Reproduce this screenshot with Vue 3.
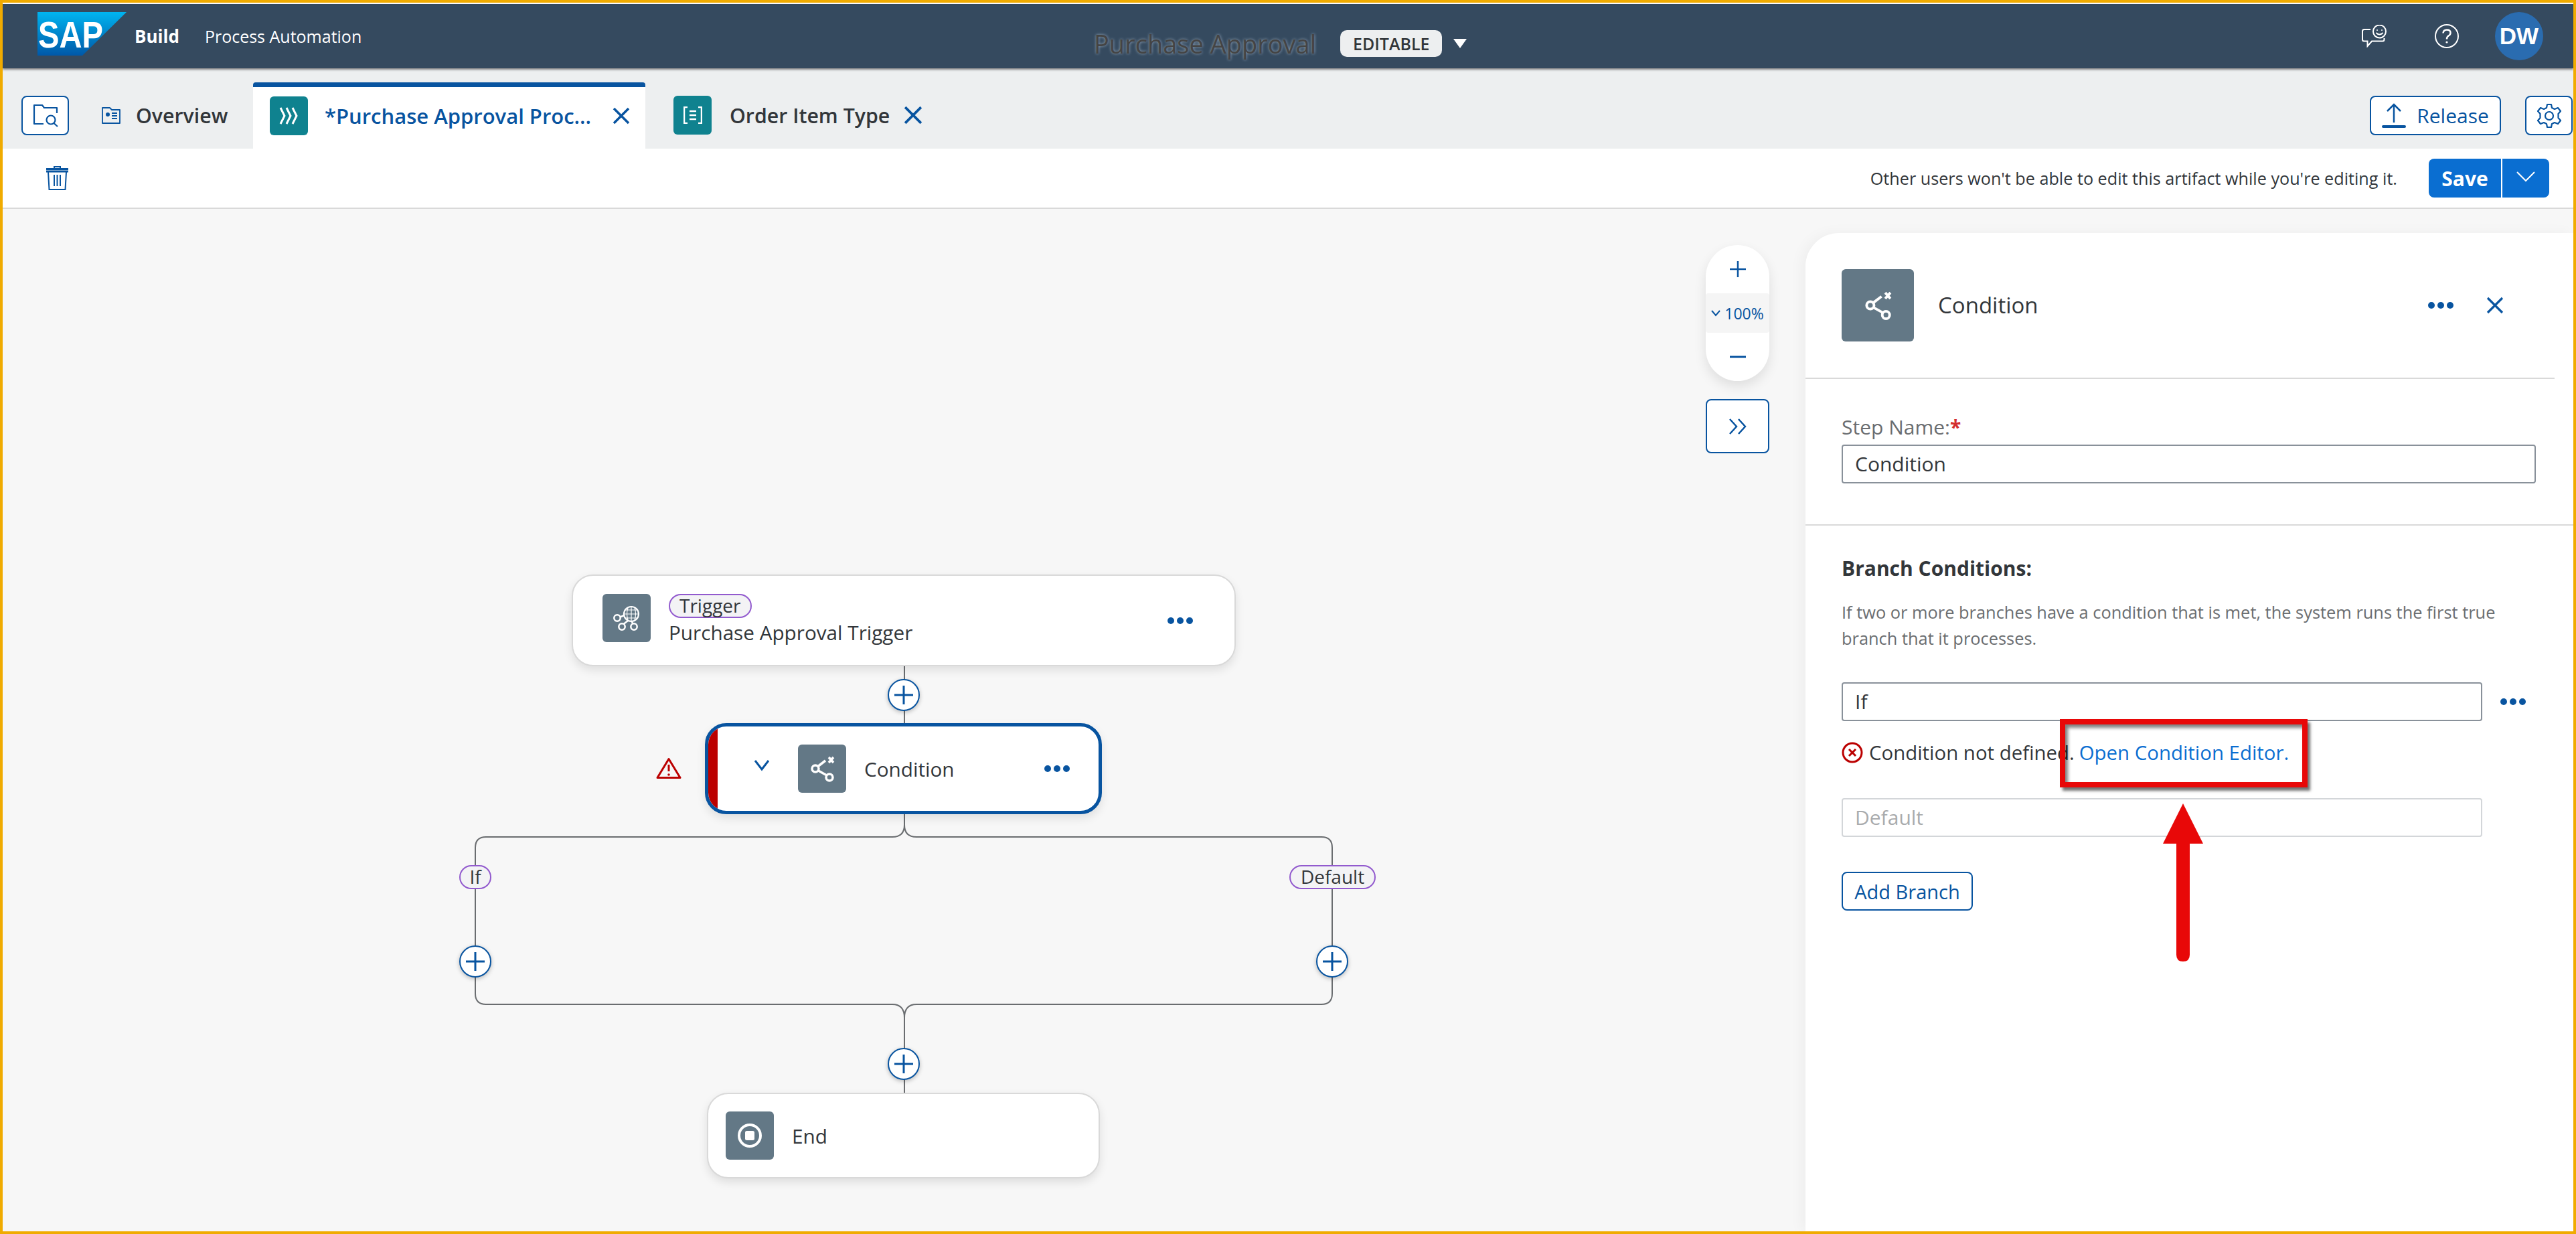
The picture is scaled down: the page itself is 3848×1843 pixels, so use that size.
<script setup>
const plusNodes = ['p1', 'p2', 'p3', 'p4']
</script>

<template>
  <div class="frame">
    <header class="shell">
      <svg class="logo" width="134" height="66" viewBox="0 0 134 66">
        <defs>
          <linearGradient id="sapg" x1="0" y1="0" x2="0" y2="1">
            <stop offset="0" stop-color="#00b4f0" />
            <stop offset="1" stop-color="#0058a8" />
          </linearGradient>
        </defs>
        <polygon points="0,0 133,0 67,65 0,65" fill="url(#sapg)" />
        <text x="1" y="53" class="logo-text" textLength="97" lengthAdjust="spacingAndGlyphs">SAP</text>
      </svg>
      <span class="brand">Build</span>
      <span class="product">Process Automation</span>
      <div class="title-group">
        <span class="doc-title">Purchase Approval</span>
        <span class="editable">EDITABLE</span>
        <svg width="20" height="14" viewBox="0 0 20 14"><polygon points="0,0 20,0 10,14" fill="#fff" /></svg>
      </div>
      <div class="shell-actions">
        <svg class="feedback" width="38" height="34" viewBox="0 0 38 34" fill="none" stroke="#fff" stroke-width="2">
          <path d="M13 7H3.500Q1 7 1 9.500V22Q1 24.500 3.500 24.500H8.500V32L15 24.500H31Q33.500 24.500 33.500 22V20" />
          <circle cx="26.500" cy="10" r="9.500" />
          <circle cx="23" cy="8" r="1" fill="#fff" stroke="none" />
          <circle cx="30" cy="8" r="1" fill="#fff" stroke="none" />
          <path d="M21.500 12Q26.500 17 31.500 12" />
        </svg>
        <svg class="help" width="36" height="36" viewBox="0 0 36 36" fill="none" stroke="#fff" stroke-width="2">
          <circle cx="18" cy="18" r="17" />
          <path d="M12.500 13.500Q13 8.500 18 8.500Q23.500 8.500 23.500 13Q23.500 16 20.500 17.500Q18 19 18 22.500" stroke-width="2.500" />
          <circle cx="18" cy="27" r="1.600" fill="#fff" stroke="none" />
        </svg>
        <div class="avatar">DW</div>
      </div>
    </header>

    <nav class="tabs">
      <button class="icon-btn search-btn">
        <svg width="38" height="35" viewBox="0 0 38 35" fill="none" stroke="#0854a0" stroke-width="2.200">
          <path d="M16 30H2V2H14L17 6H36V14" stroke-linejoin="round" />
          <circle cx="27" cy="24" r="6.500" />
          <path d="M31.500 29L37 34" />
        </svg>
      </button>
      <div class="tab tab-plain overview">
        <svg width="28" height="25" viewBox="0 0 28 25" fill="none" stroke="#0854a0" stroke-width="1.800">
          <path d="M1 1H12L15 4H27V24H1Z" stroke-linejoin="round" />
          <circle cx="9" cy="11" r="3" fill="#0854a0" stroke="none" />
          <path d="M15 9H23M15 13H23M15 17H23" stroke-width="2" />
        </svg>
        <span class="tab-label">Overview</span>
      </div>
      <div class="tab tab-active">
        <span class="tab-icon">
          <svg width="30" height="26" viewBox="0 0 30 26" fill="none" stroke="#fff" stroke-width="3">
            <path d="M2 1L8 13L2 25M11 1L17 13L11 25M20 1L26 13L20 25" />
          </svg>
        </span>
        <span class="tab-label active-label">*Purchase Approval Proc...</span>
        <svg class="tab-x" width="26" height="26" viewBox="0 0 26 26" fill="none" stroke="#0854a0" stroke-width="3.500">
          <path d="M2 2L24 24M24 2L2 24" />
        </svg>
      </div>
      <div class="tab tab-plain order">
        <span class="tab-icon">
          <svg width="28" height="26" viewBox="0 0 28 26" fill="none" stroke="#fff" stroke-width="2.500">
            <path d="M6 1H1V25H6M22 1H27V25H22M9 7H19M9 13H19M9 19H19" />
          </svg>
        </span>
        <span class="tab-label">Order Item Type</span>
        <svg class="tab-x" width="28" height="28" viewBox="0 0 26 26" fill="none" stroke="#0854a0" stroke-width="3.500">
          <path d="M2 2L24 24M24 2L2 24" />
        </svg>
      </div>
      <button class="release">
        <svg width="36" height="38" viewBox="0 0 36 38" fill="none" stroke="#0854a0" stroke-width="2.500">
          <path d="M18 29V2M8 12L18 2L28 12" />
          <path d="M2 35H34" stroke-width="4" stroke-linecap="round" />
        </svg>
        <span>Release</span>
      </button>
      <button class="icon-btn gear-btn">
        <svg width="38" height="38" viewBox="0 0 38 38" fill="none" stroke="#0854a0" stroke-width="2.200">
          <circle cx="19" cy="19" r="6" />
          <path d="M16 2H22L23 7L27 9L32 7L36 12L32.500 16V22L36 26L32 31L27 29L23 31L22 36H16L15 31L11 29L6 31L2 26L5.500 22V16L2 12L6 7L11 9L15 7Z" stroke-linejoin="round" />
        </svg>
      </button>
    </nav>

    <div class="toolbar">
      <svg class="trash" width="33" height="36" viewBox="0 0 33 36" fill="none" stroke="#0854a0" stroke-width="2">
        <path d="M12 3V1H21V3" />
        <path d="M0 4.500H33M0 8H33" stroke-width="3" />
        <path d="M3 9L4.500 35H28.500L30 9" />
        <path d="M12 13V30M16.500 13V30M21 13V30" />
      </svg>
      <span class="lock-note">Other users won't be able to edit this artifact while you're editing it.</span>
      <div class="save-group">
        <button class="save">Save</button>
        <button class="save-more">
          <svg width="28" height="16" viewBox="0 0 28 16" fill="none" stroke="#fff" stroke-width="2"><path d="M1 1L14 14L27 1" /></svg>
        </button>
      </div>
    </div>

    <main class="workspace">
      <section class="canvas">
        <svg class="wires" width="2693" height="1527" viewBox="4 312 2693 1527" fill="none" stroke="#6a6d70" stroke-width="2">
          <path d="M1351 995V1080" />
          <path d="M1351 1216V1232Q1351 1250 1333 1250H726Q710 1250 710 1266V1484Q710 1500 726 1500H1333Q1351 1500 1351 1520V1632" />
          <path d="M1351 1232Q1351 1250 1369 1250H1974Q1990 1250 1990 1266V1484Q1990 1500 1974 1500H1369Q1351 1500 1351 1520" />
        </svg>

        <div class="node trigger">
          <span class="node-icon">
            <svg width="72" height="72" viewBox="0 0 72 72" fill="none" stroke="#fff" stroke-width="2.200">
              <circle cx="43" cy="30" r="11" />
              <path d="M43 19V41M32 30H54M34 24H52M34 36H52M38 21Q35 30 38 39M48 21Q51 30 48 39" stroke-width="1.200" />
              <circle cx="22" cy="36" r="4.700" stroke-width="2.500" />
              <circle cx="29" cy="49" r="4.700" stroke-width="2.500" />
              <circle cx="47" cy="49" r="4.700" stroke-width="2.500" />
              <path d="M26.500 34.500L32.500 32M31.500 45L38 40M45.500 44.500L43.500 41" stroke-width="2.500" />
            </svg>
          </span>
          <div class="trigger-text">
            <span class="chip">Trigger</span>
            <span class="node-name">Purchase Approval Trigger</span>
          </div>
          <svg class="dots dots-trigger" width="38" height="10" viewBox="0 0 38 10"><circle cx="5" cy="5" r="5" /><circle cx="19" cy="5" r="5" /><circle cx="33" cy="5" r="5" /></svg>
        </div>

        <div class="plus" :class="plusNodes[0]"><svg width="30" height="30" viewBox="0 0 30 30" stroke="#0854a0" stroke-width="3"><path d="M15 1V29M1 15H29" /></svg></div>

        <svg class="warn" width="38" height="33" viewBox="0 0 38 33" fill="none" stroke="#bb0000" stroke-width="3">
          <path d="M19 2.500L36 30.500H2Z" stroke-linejoin="round" />
          <path d="M19 11V21" />
          <circle cx="19" cy="26" r="1.800" fill="#bb0000" stroke="none" />
        </svg>

        <div class="node condition">
          <span class="red-bar"></span>
          <svg class="node-chevron" width="24" height="18" viewBox="0 0 24 18" fill="none" stroke="#0854a0" stroke-width="3"><path d="M2 2L12 15L22 2" /></svg>
          <span class="node-icon">
            <svg width="72" height="72" viewBox="0 0 72 72" fill="none" stroke="#fff" stroke-width="3.500">
              <circle cx="26" cy="36" r="5" />
              <circle cx="47" cy="49" r="5" />
              <path d="M30 32.500L41 24M30.500 39L43 46M46 19L53 27M53 19L46 27" />
            </svg>
          </span>
          <span class="node-name cond-name">Condition</span>
          <svg class="dots dots-cond" width="38" height="10" viewBox="0 0 38 10"><circle cx="5" cy="5" r="5" /><circle cx="19" cy="5" r="5" /><circle cx="33" cy="5" r="5" /></svg>
        </div>

        <span class="chip chip-if">If</span>
        <span class="chip chip-default">Default</span>
        <div class="plus" :class="plusNodes[1]"><svg width="30" height="30" viewBox="0 0 30 30" stroke="#0854a0" stroke-width="3"><path d="M15 1V29M1 15H29" /></svg></div>
        <div class="plus" :class="plusNodes[2]"><svg width="30" height="30" viewBox="0 0 30 30" stroke="#0854a0" stroke-width="3"><path d="M15 1V29M1 15H29" /></svg></div>
        <div class="plus" :class="plusNodes[3]"><svg width="30" height="30" viewBox="0 0 30 30" stroke="#0854a0" stroke-width="3"><path d="M15 1V29M1 15H29" /></svg></div>

        <div class="node end">
          <span class="node-icon">
            <svg width="72" height="72" viewBox="0 0 72 72" fill="none" stroke="#fff" stroke-width="4">
              <circle cx="36" cy="36" r="16" />
              <rect x="29" y="29" width="14" height="14" rx="2.500" fill="#fff" stroke="none" />
            </svg>
          </span>
          <span class="node-name end-name">End</span>
        </div>

        <div class="zoom-ctl">
          <div class="zoom-btn">
            <svg width="24" height="24" viewBox="0 0 24 24" stroke="#0854a0" stroke-width="2.500"><path d="M12 0V24M0 12H24" /></svg>
          </div>
          <div class="zoom-level">
            <svg width="14" height="10" viewBox="0 0 14 10" fill="none" stroke="#0854a0" stroke-width="2"><path d="M1 1L7 8L13 1" /></svg>
            <span>100%</span>
          </div>
          <div class="zoom-btn">
            <svg width="24" height="24" viewBox="0 0 24 24" stroke="#0854a0" stroke-width="3"><path d="M0 12H24" /></svg>
          </div>
        </div>
        <button class="icon-btn collapse-btn">
          <svg width="30" height="24" viewBox="0 0 30 24" fill="none" stroke="#0854a0" stroke-width="2.500"><path d="M3 1L13 12L3 23M16 1L26 12L16 23" /></svg>
        </button>
      </section>

      <aside class="panel">
        <div class="panel-head">
          <span class="node-icon panel-icon">
            <svg width="80" height="80" viewBox="0 0 72 72" fill="none" stroke="#fff" stroke-width="3.500">
              <circle cx="26" cy="36" r="5" />
              <circle cx="47" cy="49" r="5" />
              <path d="M30 32.500L41 24M30.500 39L43 46M46 19L53 27M53 19L46 27" />
            </svg>
          </span>
          <span class="panel-title">Condition</span>
          <svg class="dots panel-dots" width="38" height="10" viewBox="0 0 38 10"><circle cx="5" cy="5" r="5" /><circle cx="19" cy="5" r="5" /><circle cx="33" cy="5" r="5" /></svg>
          <svg width="26" height="26" viewBox="0 0 26 26" fill="none" stroke="#0854a0" stroke-width="3.200"><path d="M2 2L24 24M24 2L2 24" /></svg>
        </div>

        <div class="step-section">
          <div class="field-label">Step Name:<span class="req">*</span></div>
          <div class="input">Condition</div>
        </div>

        <div class="branch-section">
          <h3 class="branch-title">Branch Conditions:</h3>
          <p class="branch-help">If two or more branches have a condition that is met, the system runs the first true branch that it processes.</p>
          <div class="branch-row">
            <div class="input input-branch">If</div>
            <svg class="dots" width="38" height="10" viewBox="0 0 38 10"><circle cx="5" cy="5" r="5" /><circle cx="19" cy="5" r="5" /><circle cx="33" cy="5" r="5" /></svg>
          </div>
          <div class="error-row">
            <svg width="32" height="32" viewBox="0 0 32 32" fill="none" stroke="#bb0000">
              <circle cx="16" cy="16" r="14" stroke-width="3" />
              <path d="M11 11L21 21M21 11L11 21" stroke-width="3" />
            </svg>
            <span class="error-text">Condition not defined.</span>
            <a class="link">Open Condition Editor.</a>
          </div>
          <div class="input input-branch input-disabled">Default</div>
          <button class="add-branch">Add Branch</button>
        </div>
      </aside>
    </main>

    <div class="callout"></div>
    <svg class="arrow" width="60" height="236" viewBox="0 0 60 236">
      <path d="M30 0L60 60H40V226Q40 236 30 236Q20 236 20 226V60H0Z" fill="#e80808" />
    </svg>
  </div>
</template>

<style>
html, body { margin: 0; overflow: hidden; background: #fff; }
</style>

<style scoped>
.frame {
  position: relative;
  box-sizing: border-box;
  width: 3848px;
  height: 1843px;
  border: 4px solid #f0ab00;
  padding-top: 2px;
  background: #fff;
  display: flex;
  flex-direction: column;
  font-family: "Open Sans", "Noto Sans", sans-serif;
  color: #32363a;
  overflow: hidden;
}
button { font-family: inherit; cursor: pointer; padding: 0; }

.shell {
  position: relative;
  z-index: 2;
  flex: none;
  height: 96px;
  background: #354a5f;
  box-shadow: 0 2px 3px rgba(0, 0, 0, .45);
  display: flex;
  align-items: center;
  color: #fff;
}
.logo { margin-left: 52px; margin-top: -6px; flex: none; overflow: visible; }
.logo-text { font: 700 56px "Liberation Sans", sans-serif; fill: #fff; }
.brand { margin-left: 11px; font-size: 26px; font-weight: 700; }
.product { margin-left: 38px; font-size: 25px; }
.title-group {
  position: absolute;
  left: 1630px;
  top: 11px;
  height: 96px;
  display: flex;
  align-items: center;
}
.doc-title {
  font-size: 38px;
  color: #444;
  text-shadow: 0 0 4px #9fb0c0;
}
.editable {
  margin-left: 36px;
  width: 152px;
  height: 40px;
  line-height: 40px;
  text-align: center;
  background: #edeff0;
  border-radius: 10px;
  color: #32363a;
  font-size: 25px;
  font-weight: 600;
}
.title-group svg { margin-left: 17px; }
.shell-actions {
  margin-left: auto;
  display: flex;
  align-items: center;
  padding-right: 45px;
}
.help { margin-left: 71px; }
.avatar {
  margin-left: 54px;
  width: 72px;
  height: 72px;
  border-radius: 50%;
  background: #2a6cb0;
  text-align: center;
  line-height: 72px;
  font-family: "Liberation Sans", sans-serif;
  font-size: 35px;
  font-weight: 700;
}

.tabs {
  flex: none;
  height: 120px;
  background: #edeff0;
  display: flex;
  align-items: flex-start;
  padding-right: 1px;
}
.icon-btn {
  box-sizing: border-box;
  display: flex;
  align-items: center;
  justify-content: center;
  background: #fff;
  border: 2px solid #0854a0;
  border-radius: 8px;
}
.search-btn { margin: 41px 0 0 28px; width: 71px; height: 59px; flex: none; }
.tab { display: flex; align-items: center; flex: none; }
.tab-plain { height: 58px; margin-top: 41px; }
.overview { margin-left: 49px; width: 226px; }
.overview .tab-label { margin-left: 23px; }
.tab-label { font-size: 30.300px; font-weight: 600; white-space: nowrap; }
.tab-active {
  box-sizing: border-box;
  margin-top: 21px;
  width: 586px;
  height: 99px;
  background: #fff;
  border-top: 7px solid #0854a0;
  border-radius: 4px 4px 0 0;
  padding-left: 25px;
  padding-bottom: 7px;
}
.tab-icon {
  flex: none;
  width: 57px;
  height: 58px;
  border-radius: 6px;
  background: #0f828f;
  display: flex;
  align-items: center;
  justify-content: center;
}
.active-label { margin-left: 25px; width: 403px; color: #0854a0; font-size: 31px; }
.tab-x { margin-left: 27px; flex: none; }
.order { margin-left: 42px; }
.order .tab-label { margin-left: 27px; }
.order .tab-x { margin-left: 21px; }
.release {
  box-sizing: border-box;
  margin: 41px 0 0 auto;
  width: 196px;
  height: 59px;
  flex: none;
  display: flex;
  align-items: center;
  justify-content: center;
  gap: 16px;
  background: #fff;
  border: 2px solid #0854a0;
  border-radius: 8px;
  color: #0854a0;
  font-size: 30px;
}
.gear-btn { margin: 41px 0 0 36px; width: 71px; height: 59px; flex: none; }

.toolbar {
  flex: none;
  box-sizing: border-box;
  height: 90px;
  border-bottom: 2px solid #d9d9d9;
  background: #fff;
  display: flex;
  align-items: center;
  padding: 0 36px 0 65px;
}
.lock-note { margin-left: auto; font-size: 25.200px; white-space: nowrap; }
.save-group { margin-left: 47px; display: flex; height: 58px; }
.save {
  width: 108px;
  border: 0;
  background: #0a6ed1;
  color: #fff;
  border-radius: 8px 0 0 8px;
  font-size: 30px;
  font-weight: 700;
}
.save-more {
  margin-left: 2px;
  width: 70px;
  border: 0;
  background: #0a6ed1;
  border-radius: 0 8px 8px 0;
}

.workspace {
  flex: 1;
  min-height: 0;
  display: flex;
  background: #f7f7f7;
}
.canvas { position: relative; flex: 1; min-width: 0; }
.wires { position: absolute; left: 0; top: 0; }

.node {
  position: absolute;
  box-sizing: border-box;
  background: #fff;
  border: 2px solid #d9d9d9;
  border-radius: 32px;
  box-shadow: 0 6px 14px rgba(0, 0, 0, .1);
  display: flex;
}
.node-icon {
  flex: none;
  width: 72px;
  height: 72px;
  border-radius: 6px;
  background: #637886;
  display: flex;
  align-items: center;
  justify-content: center;
}
.node-name { font-size: 29.700px; white-space: nowrap; }
.trigger {
  left: 850px;
  top: 546px;
  width: 992px;
  height: 137px;
  padding: 27px 0 0 44px;
  align-items: flex-start;
}
.trigger-text { margin-left: 27px; display: flex; flex-direction: column; align-items: flex-start; }
.trigger-text .node-name { margin-top: 1px; line-height: 42px; }
.dots { fill: #0854a0; flex: none; }
.dots-trigger { position: absolute; right: 62px; top: 62px; }
.chip {
  box-sizing: border-box;
  display: inline-block;
  height: 36px;
  line-height: 31px;
  border: 2px solid #925ace;
  border-radius: 18px;
  background: #f3f3f5;
  color: #32363a;
  font-size: 28px;
  text-align: center;
  padding: 0 14px;
}
.chip-if { position: absolute; left: 682px; top: 980px; width: 48px; padding: 0; }
.chip-default { position: absolute; left: 1922px; top: 980px; width: 129px; padding: 0; }

.plus {
  position: absolute;
  box-sizing: border-box;
  width: 48px;
  height: 48px;
  border: 2px solid #0854a0;
  border-radius: 50%;
  background: #fff;
  box-shadow: 0 2px 6px rgba(0, 0, 0, .25);
  display: flex;
  align-items: center;
  justify-content: center;
}
.p1 { left: 1322px; top: 702px; }
.p2 { left: 682px; top: 1100px; }
.p3 { left: 1962px; top: 1100px; }
.p4 { left: 1322px; top: 1253px; }
.warn { position: absolute; left: 976px; top: 819px; }
.condition {
  left: 1049px;
  top: 768px;
  width: 593px;
  height: 136px;
  border: 5px solid #0854a0;
  overflow: hidden;
  align-items: center;
  padding: 0 43px 0 68px;
}
.red-bar { position: absolute; left: 0; top: 0; bottom: 0; width: 14px; background: #bb0000; }
.node-chevron { flex: none; margin-top: -10px; }
.condition .node-icon { margin-left: 42px; }
.cond-name { margin-left: 27px; }
.dots-cond { margin-left: auto; }
.end {
  left: 1052px;
  top: 1320px;
  width: 587px;
  height: 128px;
  align-items: center;
  padding-left: 26px;
}
.end-name { margin-left: 27px; }

.zoom-ctl {
  position: absolute;
  left: 2544px;
  top: 54px;
  width: 95px;
  height: 203px;
  border-radius: 48px;
  background: #fff;
  box-shadow: 0 8px 18px rgba(0, 0, 0, .1);
  display: flex;
  flex-direction: column;
}
.zoom-btn { flex: 1; display: flex; align-items: center; justify-content: center; }
.zoom-level {
  height: 59px;
  background: #f5f5f5;
  border-radius: 4px;
  display: flex;
  align-items: center;
  justify-content: center;
  gap: 6px;
  color: #0854a0;
  font-size: 23px;
}
.collapse-btn { position: absolute; left: 2544px; top: 284px; width: 95px; height: 81px; }

.panel {
  flex: none;
  width: 1147px;
  margin-top: 36px;
  background: #fff;
  border-radius: 50px 0 0 0;
  box-shadow: -6px 0 20px rgba(0, 0, 0, .04);
  display: flex;
  flex-direction: column;
}
.panel-head {
  box-sizing: border-box;
  flex: none;
  height: 218px;
  margin-right: 28px;
  padding: 54px 76px 0 54px;
  border-bottom: 2px solid #d9d9d9;
  display: flex;
  align-items: flex-start;
}
.panel-icon { width: 108px; height: 108px; }
.panel-title { margin-left: 36px; height: 108px; line-height: 108px; font-size: 33px; }
.panel-dots { margin: 49px 49px 0 auto; }
.panel-head > svg:last-child { margin-top: 41px; flex: none; }
.step-section {
  box-sizing: border-box;
  flex: none;
  height: 219px;
  padding: 52px 56px 0 54px;
  border-bottom: 2px solid #d9d9d9;
}
.field-label { height: 40px; line-height: 40px; font-size: 30px; color: #6a6d70; }
.req { color: #d32f2f; font-weight: 700; }
.input {
  box-sizing: border-box;
  height: 58px;
  margin-top: 6px;
  line-height: 54px;
  padding-left: 18px;
  border: 2px solid #89919a;
  border-radius: 4px;
  background: #fff;
  font-size: 30px;
}
.branch-section { flex: 1; padding: 44px 56px 0 54px; }
.branch-title { margin: 0; height: 40px; line-height: 40px; font-size: 30px; font-weight: 700; }
.branch-help {
  margin: 26px 0 0;
  width: 990px;
  line-height: 39px;
  font-size: 25.400px;
  color: #6a6d70;
}
.branch-row { display: flex; align-items: center; gap: 27px; margin-top: 46px; }
.branch-row .input { margin-top: 0; }
.input-branch { width: 957px; flex: none; }
.error-row { display: flex; align-items: center; height: 40px; margin-top: 27px; font-size: 29.400px; white-space: nowrap; }
.error-text { margin-left: 9px; }
.link { margin-left: 7px; color: #0a6ed1; }
.input-disabled { margin-top: 48px; border-color: #d3d6d9; color: #a9abad; }
.add-branch {
  box-sizing: border-box;
  display: block;
  margin-top: 52px;
  width: 196px;
  height: 58px;
  background: #fff;
  border: 2px solid #0854a0;
  border-radius: 8px;
  color: #0854a0;
  font-size: 29px;
}

.callout {
  position: absolute;
  left: 3073px;
  top: 1070px;
  width: 370px;
  height: 102px;
  box-sizing: border-box;
  border: 8px solid #e80808;
  box-shadow: 4px 5px 4px rgba(0, 0, 0, .55), inset 4px 5px 5px rgba(0, 0, 0, .5);
}
.arrow { position: absolute; left: 3227px; top: 1196px; }
</style>
